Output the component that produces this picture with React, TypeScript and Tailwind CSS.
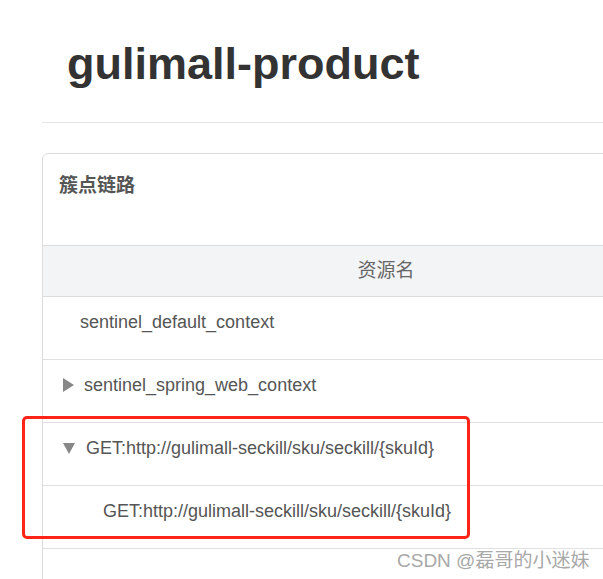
import React from 'react';

const Caret = ({ open }: { open?: boolean }) =>
  open ? (
    <svg width="14" height="13" viewBox="0 0 14 13" className="shrink-0">
      <path d="M1 1 L13 1 L7 12 Z" fill="#888" />
    </svg>
  ) : (
    <svg width="11" height="14" viewBox="0 0 11 14" className="shrink-0">
      <path d="M0 0 L11 7 L0 14 Z" fill="#888" />
    </svg>
  );

const rows = [
  { label: 'sentinel_default_context', indent: 'pl-[37px]' },
  { label: 'sentinel_spring_web_context', indent: 'pl-[20px]', caret: 'closed' },
  { label: 'GET:http://gulimall-seckill/sku/seckill/{skuId}', indent: 'pl-[19px]', caret: 'open' },
  { label: 'GET:http://gulimall-seckill/sku/seckill/{skuId}', indent: 'pl-[60px]' },
];

export default function App() {
  return (
    <div
      className="relative w-[603px] h-[579px] overflow-hidden bg-white"
      style={{ fontFamily: '"Liberation Sans", Arial, "Noto Sans CJK SC", sans-serif' }}
    >
      <h1 className="pl-[67px] pt-[41px] text-[45px] leading-none font-bold text-[#333]">gulimall-product</h1>

      <div className="ml-[42px] mt-[36px] border-t border-[#e5e5e5]" />

      <div className="ml-[42px] mt-[30px] w-[720px] border border-[#dcdcdc] rounded-[6px]">
        <div className="h-[91px] pl-[16px] pt-[18px]">
          <h3 className="text-[19px] leading-[27px] font-bold text-[#555]">簇点链路</h3>
        </div>

        <div className="w-[686px] h-[52px] bg-[#f3f4f6] border-y border-[#dcdcdc] flex items-center justify-center text-[19px] text-[#666]">
          资源名
        </div>

        {rows.map((r, i) => (
          <div
            key={i}
            className={`h-[63px] pb-[12px] border-b border-[#e0e0e0] flex items-center gap-[10px] text-[18px] text-[#555] ${r.indent}`}
          >
            {r.caret && <Caret open={r.caret === 'open'} />}
            <span>{r.label}</span>
          </div>
        ))}
        <div className="h-[60px]" />
      </div>

      {/* red annotation box */}
      <div className="absolute left-[22px] top-[416px] w-[448px] h-[123px] border-[3px] border-[#ff2418] rounded-[5px]" />

      {/* watermark */}
      <div
        className="absolute left-[397px] top-[548px] text-[19px] leading-[26px] text-[#a8a8a8]"
        style={{ textShadow: '0 0 2px #fff' }}
      >
        CSDN @磊哥的小迷妹
      </div>
    </div>
  );
}
